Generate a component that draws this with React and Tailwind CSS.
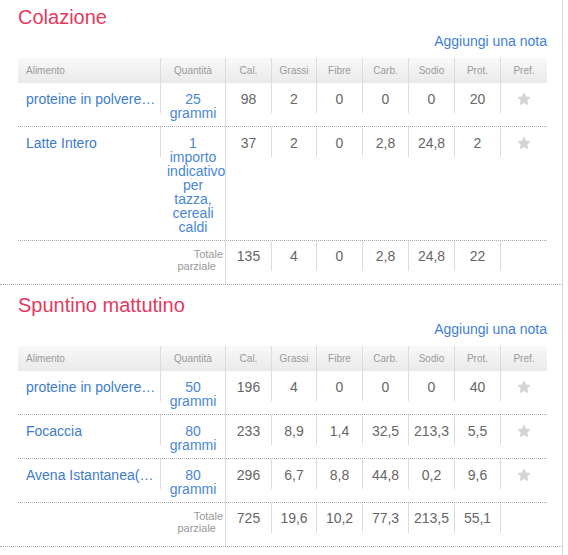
import React from 'react'

const GRID = 'grid grid-cols-[143px_65px_46px_45px_46px_46px_46px_46px_46px]'

const HEADS = ['Quantità', 'Cal.', 'Grassi', 'Fibre', 'Carb.', 'Sodio', 'Prot.', 'Pref.']

const MEALS = [
  {
    title: 'Colazione',
    pad: 'pt-[5px]',
    rows: [
      { name: 'proteine in polvere…', qty: '25 grammi', vals: ['98', '2', '0', '0', '0', '20'] },
      { name: 'Latte Intero', qty: '1 importo indicativo per tazza, cereali caldi', vals: ['37', '2', '0', '2,8', '24,8', '2'] },
    ],
    total: ['135', '4', '0', '2,8', '24,8', '22'],
  },
  {
    title: 'Spuntino mattutino',
    pad: 'pt-[8px]',
    rows: [
      { name: 'proteine in polvere…', qty: '50 grammi', vals: ['196', '4', '0', '0', '0', '40'] },
      { name: 'Focaccia', qty: '80 grammi', vals: ['233', '8,9', '1,4', '32,5', '213,3', '5,5'] },
      { name: 'Avena Istantanea(…', qty: '80 grammi', vals: ['296', '6,7', '8,8', '44,8', '0,2', '9,6'] },
    ],
    total: ['725', '19,6', '10,2', '77,3', '213,5', '55,1'],
  },
]

function Star() {
  return (
    <svg width="16" height="16" viewBox="0 0 24 24" className="mx-auto">
      <path d="M12 1.8l3.1 6.6 7.2.9-5.3 5 1.4 7.1L12 17.9l-6.4 3.5 1.4-7.1-5.3-5 7.2-.9z" fill="#d4d4d4" />
    </svg>
  )
}

function Header() {
  return (
    <div className={`${GRID} h-[25px] bg-linear-to-b from-[#f8f8f8] to-[#eaeaea] text-[10px] text-[#9a9a9a]`}>
      <div className="flex items-center border-r border-[#dcdcdc] pl-2">Alimento</div>
      {HEADS.map((h, i) => (
        <div key={h} className={`flex items-center justify-center ${i < HEADS.length - 1 ? 'border-r border-[#dcdcdc]' : ''}`}>{h}</div>
      ))}
    </div>
  )
}

function FoodRow({ name, qty, vals }) {
  return (
    <div className={`${GRID} items-start border-b border-dotted border-[#aaaaaa]`}>
      <div className="truncate border-r border-[#dcdcdc] pt-[9px] pb-[7px] pl-2 pr-[2px] text-[14px] leading-[14px] text-[#3d7bcc]">{name}</div>
      <div className="self-stretch border-r border-[#dcdcdc] px-[6px] pt-[9px] pb-[6px] text-center text-[14px] leading-[14px] text-[#4a86d6]">{qty}</div>
      {vals.map((v, i) => (
        <div key={i} className="border-r border-[#dcdcdc] pt-[9px] pb-[7px] text-center text-[14px] leading-[14px] text-[#666]">{v}</div>
      ))}
      <div className="pt-[8px]"><Star /></div>
    </div>
  )
}

function TotalRow({ vals }) {
  return (
    <div className={`${GRID} h-[43px] items-start`}>
      <div />
      <div className="flex flex-col items-end self-stretch border-r border-[#dcdcdc] pt-[7px] pr-[2px] text-[11px] leading-[12px] text-[#999]">
        <span>Totale</span>
        <span className="mr-[7px]">parziale</span>
      </div>
      {vals.map((v, i) => (
        <div key={i} className="border-r border-[#dcdcdc] pt-[8px] pb-[8px] text-center text-[14px] leading-[14px] text-[#666]">{v}</div>
      ))}
      <div />
    </div>
  )
}

export default function App() {
  return (
    <div className="min-h-[555px] w-[563px] border-r border-[#dddddd] bg-white font-['Liberation_Sans',Arial,sans-serif]">
      {MEALS.map((m) => (
        <section key={m.title} className={`border-b border-dotted border-[#aaaaaa] ${m.pad}`}>
          <h2 className="pl-[18px] text-[20px] leading-[24px] text-[#e5385d]">{m.title}</h2>
          <div className="mt-[4px] mr-[15px] text-right text-[14px] leading-[16px] text-[#3f7fd6]">Aggiungi una nota</div>
          <div className="mt-[9px] ml-[18px] w-[529px]">
            <Header />
            {m.rows.map((r, i) => (
              <FoodRow key={i} {...r} />
            ))}
            <TotalRow vals={m.total} />
          </div>
        </section>
      ))}
    </div>
  )
}
